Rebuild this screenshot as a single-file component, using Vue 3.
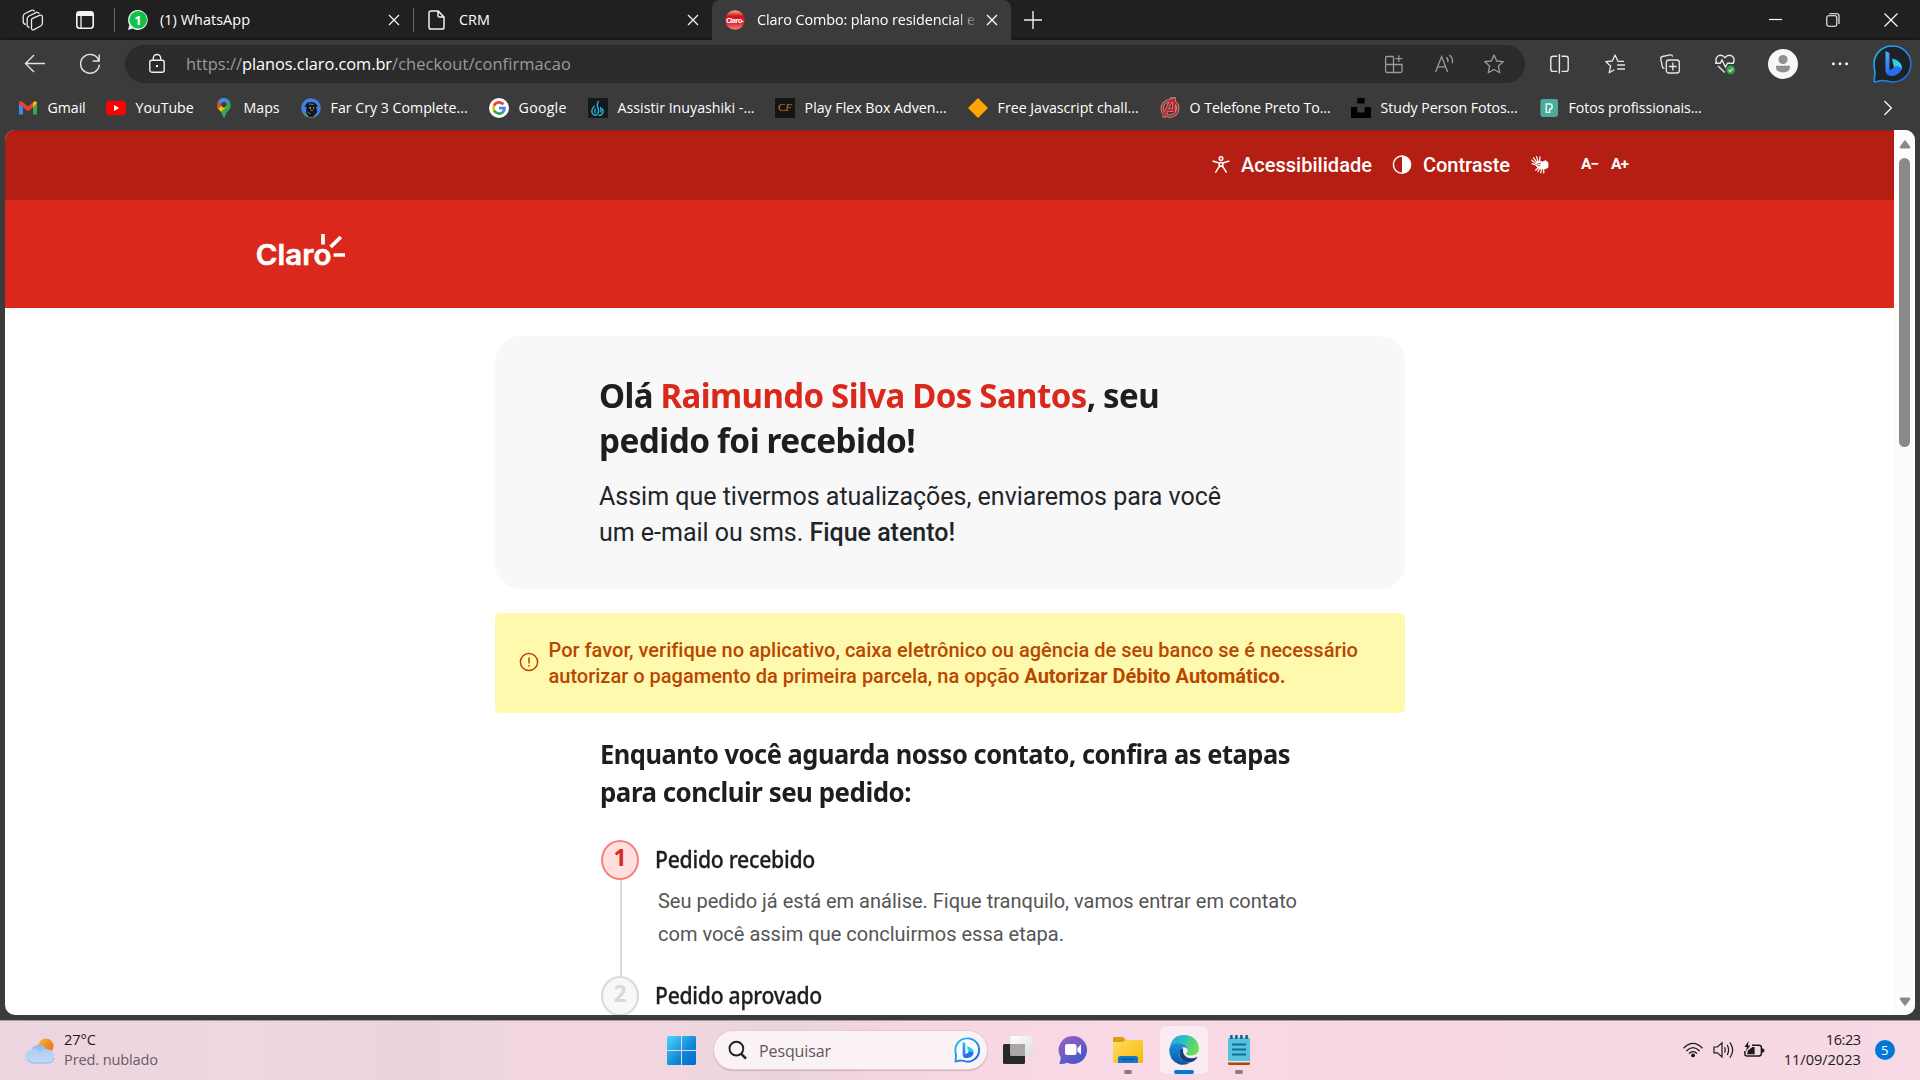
<script setup>
// Tracks a line of text so that it spans the given width in pixels.
const vFit = {
  mounted(el, { value, modifiers }) {
    const w = el.getBoundingClientRect().width
    if (modifiers.scale) {
      el.style.transform = `scaleX(${value / w})`
    } else {
      el.style.letterSpacing = `${(value - w) / el.textContent.length}px`
    }
  },
}

const bookmarks = [
  { id: 'gmail', label: 'Gmail', slot: 88, text: 38 },
  { id: 'youtube', label: 'YouTube', slot: 108, text: 58 },
  { id: 'maps', label: 'Maps', slot: 87, text: 36 },
  { id: 'farcry', label: 'Far Cry 3 Complete...', slot: 188, text: 137 },
  { id: 'google', label: 'Google', slot: 99, text: 48 },
  { id: 'fire', label: 'Assistir Inuyashiki -...', slot: 187, text: 137 },
  { id: 'flex', label: 'Play Flex Box Adven...', slot: 193, text: 142 },
  { id: 'diamond', label: 'Free Javascript chall...', slot: 192, text: 141 },
  { id: 'avengers', label: 'O Telefone Preto To...', slot: 191, text: 141 },
  { id: 'unsplash', label: 'Study Person Fotos...', slot: 188, text: 137 },
  { id: 'pexels', label: 'Fotos profissionais...', slot: 165, text: 133 },
]

const steps = [
  {
    n: 1,
    title: 'Pedido recebido',
    width: 160,
    active: true,
    lines: [
      { t: 'Seu pedido já está em análise. Fique tranquilo, vamos entrar em contato', w: 639 },
      { t: 'com você assim que concluirmos essa etapa.', w: 406 },
    ],
  },
  { n: 2, title: 'Pedido aprovado', width: 167, active: false, lines: [] },
]
</script>

<template>
  <div class="desktop">
    <div class="tabstrip">
      <svg class="ic workspaces" width="22" height="22" viewBox="0 0 22 22" fill="none" stroke="#e8e8e8" stroke-width="1.3" stroke-linejoin="round">
        <path d="M9.5 10.8 Q9.5 9.8 10.6 9.3 L18 6.2 Q20.4 5.8 20.4 8 V14 Q20.4 16 18.6 17 L12 20.6 Q9.5 21.4 9.5 19 Z" />
        <path d="M7.5 18.5 Q5.2 18 5.2 16 V10 Q5.2 8 7 7 L14.5 3.4 Q16.6 2.9 17 4.8" />
        <path d="M3.8 15.5 Q1.2 15 1.2 12.8 V7.5 Q1.2 5.4 3 4.5 L9.5 1.3 Q11.8 .6 12.6 2.4" />
      </svg>
      <svg class="ic tabactions" width="20" height="20" viewBox="0 0 20 20" fill="none" stroke="#f2f2f2" stroke-width="1.6">
        <rect x="1.8" y="1.8" width="16.4" height="16.4" rx="2.6" /><path d="M2 4 H18" stroke-width="4" /><path d="M6 6 V18" stroke-width="1.3" />
      </svg>
      <div class="tab first">
        <svg width="20" height="20" viewBox="0 0 20 20">
          <path d="M10 0 A10 10 0 1 1 4.6 18.6 L0 20 L1.4 15 A10 10 0 0 1 10 0" fill="#e8f5eb" />
          <circle cx="10.2" cy="9.8" r="8.8" fill="#12c04a" />
          <text x="10" y="14.6" text-anchor="middle" font-size="13" font-weight="700" fill="#fff">1</text>
        </svg>
        <span class="tabname" v-fit="90">(1) WhatsApp</span>
        <svg class="close" width="12" height="12" viewBox="0 0 12 12"><path d="M1 1 L11 11 M11 1 L1 11" stroke="#f0f0f0" stroke-width="1.3" /></svg>
      </div>
      <div class="tab second">
        <svg width="17" height="20" viewBox="0 0 17 20" fill="none" stroke="#f0f0f0" stroke-width="1.5" stroke-linejoin="round">
          <path d="M3 .9 H10 L16 7 V17 Q16 19.1 14 19.1 H3 Q1 19.1 1 17 V3 Q1 .9 3 .9 Z M10 1 V5.4 Q10 7 11.6 7 H16" />
        </svg>
        <span class="tabname" v-fit="31">CRM</span>
        <svg class="close" width="12" height="12" viewBox="0 0 12 12"><path d="M1 1 L11 11 M11 1 L1 11" stroke="#f0f0f0" stroke-width="1.3" /></svg>
      </div>
      <div class="tab active">
        <svg width="20" height="20" viewBox="0 0 20 20">
          <defs><linearGradient id="cl" x1="0" y1="0" x2="0" y2="1"><stop offset="0" stop-color="#ffb08a" /><stop offset=".3" stop-color="#d31322" /><stop offset=".62" stop-color="#dd1c2a" /><stop offset="1" stop-color="#f6867c" /></linearGradient></defs>
          <circle cx="10" cy="10" r="9.8" fill="url(#cl)" />
          <text x="10" y="12.6" text-anchor="middle" font-size="7.4" font-weight="700" fill="#fff" textLength="18">Claro-</text>
        </svg>
        <div class="clip"><span class="tabname" v-fit="218">Claro Combo: plano residencial e</span></div>
        <svg class="close" width="12" height="12" viewBox="0 0 12 12"><path d="M1 1 L11 11 M11 1 L1 11" stroke="#fff" stroke-width="1.3" /></svg>
      </div>
      <svg class="plus" width="18" height="18" viewBox="0 0 18 18"><path d="M9 0 V18 M0 9 H18" stroke="#f0f0f0" stroke-width="1.4" /></svg>
      <div class="winbtns">
        <svg width="14" height="14" viewBox="0 0 14 14"><path d="M1 6.5 H14" stroke="#fff" stroke-width="1.2" /></svg>
        <svg width="14" height="14" viewBox="0 0 14 14" fill="none" stroke="#fff" stroke-width="1.1"><rect x=".8" y="2.8" width="10" height="10.4" rx="1.6" /><path d="M3.2 .8 H11 Q13 .8 13 2.8 V11" /></svg>
        <svg width="14" height="14" viewBox="0 0 14 14"><path d="M.5 .5 L13.5 13.5 M13.5 .5 L.5 13.5" stroke="#fff" stroke-width="1.2" /></svg>
      </div>
    </div>

    <div class="toolbar">
      <svg class="back" width="22" height="20" viewBox="0 0 22 20" fill="none" stroke="#e4e4e4" stroke-width="1.4"><path d="M21 9.5 H1.5 M10 1 L1.5 9.5 L10 18" /></svg>
      <svg class="reload" width="22" height="22" viewBox="0 0 22 22" fill="none" stroke="#e4e4e4" stroke-width="1.4"><path d="M20 8 A9.4 9.4 0 1 0 20.4 11.6 M20.2 1.4 V8 H13.6" /></svg>
      <div class="address">
        <svg class="lock" width="16" height="20" viewBox="0 0 16 20" fill="none" stroke="#f0f0f0" stroke-width="1.4"><rect x=".8" y="6.2" width="14.4" height="12" rx="2" /><path d="M4.3 6.2 V4.2 A3.7 3.7 0 0 1 11.7 4.2 V6.2" /><circle cx="8" cy="12.2" r="1.1" fill="#fff" stroke="none" /></svg>
        <span class="url dim" v-fit="56">https://</span><span class="url" v-fit="150">planos.claro.com.br</span><span class="url dim" v-fit="179">/checkout/confirmacao</span>
        <div class="pageacts">
          <svg width="20" height="20" viewBox="0 0 20 20" fill="none" stroke="#9a9a9a" stroke-width="1.3"><path d="M9.5 2.5 H3 Q1.6 2.5 1.6 4 V17 Q1.6 18.5 3 18.5 H16.5 Q18 18.5 18 17 V10.5 H1.6 M9.5 2.5 V18.5 M14.8 1.2 V8 M11.4 4.6 H18.4" /></svg>
          <svg width="20" height="20" viewBox="0 0 20 20" fill="none" stroke="#9a9a9a" stroke-width="1.3"><path d="M1.6 18 L7.6 2.6 L13.6 18 M3.8 12.8 H11.4 M12.2 3.4 Q14.6 5 13.8 8.2 M15.2 1 Q19.6 4.2 18.2 9.2" /></svg>
          <svg width="20" height="20" viewBox="0 0 20 20" fill="none" stroke="#9a9a9a" stroke-width="1.3" stroke-linejoin="round"><path d="M10 1 L12.7 7 L19.2 7.7 L14.4 12.1 L15.8 18.8 L10 15.5 L4.2 18.8 L5.6 12.1 L.8 7.7 L7.3 7 Z" /></svg>
        </div>
      </div>
      <div class="acts">
        <svg width="20" height="20" viewBox="0 0 20 20" fill="none" stroke="#e8e8e8" stroke-width="1.4"><path d="M7.2 2.2 H3 Q.8 2.2 .8 4.4 V15.2 Q.8 17.4 3 17.4 H7.2 M11.6 2.2 H16 Q18.2 2.2 18.2 4.4 V15.2 Q18.2 17.4 16 17.4 H11.6 M9.4 0 V19.6" /></svg>
        <svg width="20" height="20" viewBox="0 0 20 20" fill="none" stroke="#e8e8e8" stroke-width="1.3" stroke-linejoin="round"><path d="M19 7.3 H13 L10 1 L7.3 7 L.8 7.7 L5.6 12.1 L4.2 18.8 L9.3 15.8 M12.2 11 H20 M12.2 15 H20" /></svg>
        <svg width="20" height="20" viewBox="0 0 20 20" fill="none" stroke="#e8e8e8" stroke-width="1.3"><path d="M4.4 14 Q2.6 14.5 2.3 12.5 L.8 5 Q.4 3 2.4 2.5 L10 .9 Q12.2 .6 12.7 2.7" /><rect x="6.3" y="6" width="13" height="13" rx="2.6" /><path d="M12.8 8.6 V16.4 M8.9 12.5 H16.7" /></svg>
        <svg width="20" height="20" viewBox="0 0 20 20" fill="none" stroke="#e8e8e8" stroke-width="1.4"><path d="M1.6 9 Q-.2 4.4 3 2 Q6.8 -.2 10 3.6 Q13.2 -.2 17 2 Q20.2 4.4 18.4 9 M0 9.3 H5.2 L7 6 L10.4 13 L12.6 9.2 H19 M3 12 L9.8 18.4" /><circle cx="15.6" cy="15.8" r="4.4" fill="#37a343" stroke="none" /><path d="M13.6 16 L15.2 17.4 L17.8 14.4" stroke="#d8f0d8" stroke-width="1.1" /></svg>
        <svg class="avatar" width="30" height="30" viewBox="0 0 30 30"><circle cx="15" cy="15" r="15" fill="#f7f7f7" /><circle cx="15" cy="10.5" r="4.6" fill="#8f8f8f" /><path d="M8 16.8 H22 Q22.4 23.4 15 23.4 Q7.6 23.4 8 16.8" fill="#8f8f8f" /></svg>
        <svg class="dots" width="18" height="20" viewBox="0 0 18 20" fill="#f0f0f0"><circle cx="2.4" cy="9.7" r="1.5" /><circle cx="9" cy="9.7" r="1.5" /><circle cx="15.6" cy="9.7" r="1.5" /></svg>
        <svg class="bing" width="38" height="38" viewBox="0 0 38 38">
          <defs><linearGradient id="bo" x1="0" y1="0" x2="1" y2="1"><stop offset="0" stop-color="#23c3f5" /><stop offset="1" stop-color="#1b5fe0" /></linearGradient><linearGradient id="bb" x1="0" y1="0" x2=".6" y2="1"><stop offset="0" stop-color="#4fb7ff" /><stop offset="1" stop-color="#1b62f0" /></linearGradient></defs>
          <path d="M19 1 A18 18 0 1 1 14 36 Q9 34.5 2 37 Q1 37 1.2 36 L2 27 Q1 23 1 19 A18 18 0 0 1 19 1" fill="#1e2226" stroke="url(#bo)" stroke-width="1.6" />
          <path d="M12.5 6 L16.5 8 V24 L19 29 L17.5 30.5 Q12.5 30.5 12.5 24 Z" fill="url(#bb)" /><path d="M19 13.5 Q28 15.5 29 22 Q29 25 26.5 26.5 L21 22.5 Z" fill="#2bcfe9" /><path d="M16 26 L23 21.3 Q27 21 28.5 24 Q26 30.5 18.5 31 Q15 31 13.5 28 Z" fill="#2a6df4" />
        </svg>
      </div>
    </div>

    <div class="bookmarks">
      <div v-for="b in bookmarks" :key="b.id" class="bm" :style="{ width: b.slot + 'px' }">
        <svg width="20" height="20" viewBox="0 0 20 20">
          <g v-if="b.id === 'gmail'"><path d="M1 5 V16.5 H5 V9 Z" fill="#4285f4" /><path d="M19 5 V16.5 H15 V9 Z" fill="#34a853" /><path d="M1 5 Q1 2.6 3.4 3 L10 8.4 L16.6 3 L15.4 9 L10 13.3 L5 9.2 L1 6 Z" fill="#ea4335" /><path d="M15 4.4 Q19 1.6 19 5.6 L15 9.2 Z" fill="#fbbc04" /></g>
          <g v-else-if="b.id === 'youtube'"><rect x="0" y="3" width="20" height="14" rx="3" fill="#f00" /><path d="M8 7 L13.2 10 L8 13 Z" fill="#fff" /></g>
          <g v-else-if="b.id === 'maps'"><path d="M10 0 Q3 .4 3.2 7.4 Q4 11.5 7 13.6 L9.2 19 Q10 21 10.8 19 Q11 16.5 13.5 13.6 Q17 10.5 16.8 7 Q16.4 .6 10 0" fill="#34a853" /><path d="M5 2.6 L8.4 5.6 L3.6 11 Q2.2 6 5 2.6" fill="#ea4335" /><path d="M5 2.6 Q10 -2.4 15 2.6 L8.4 9 Z" fill="#4285f4" /><path d="M4 10.8 L12 4 L13 8.4 L7 13.8 Z" fill="#fbbc04" /><circle cx="10" cy="6.8" r="2.7" fill="#3b3b3b" /></g>
          <g v-else-if="b.id === 'farcry'"><circle cx="10" cy="10" r="9.8" fill="#3f82e6" /><path d="M2 15.6 A9.8 9.8 0 0 0 15 18.4 L12 13 Z" fill="#4c9f5c" /><path d="M3.4 8.4 L6 5 Q10 3 14 5 L17 8 L15 9 L16.4 14 L12 19 H8 L5 15 L5.4 9 Z" fill="#15171d" /><path d="M8 9.6 L10 9.2 V11.2 Z M12 9.2 L13.4 9.8 L12 11 Z" fill="#cfd3dc" /><path d="M6.5 14 L9.5 16 M8 6 L12.6 6.4 M9.6 12.6 L12 12.4" stroke="#7480a0" /></g>
          <g v-else-if="b.id === 'google'"><circle cx="10" cy="10" r="10" fill="#fff" /><g fill="none" stroke-width="2.7"><path d="M14.4 6.4 A5.6 5.6 0 0 0 5 7.6" stroke="#ea4335" /><path d="M5 7.6 A5.6 5.6 0 0 0 5 12.6" stroke="#fbbc05" /><path d="M5 12.4 A5.6 5.6 0 0 0 13.7 14.2" stroke="#34a853" /><path d="M13.6 14.4 Q15.6 12.8 15.5 10.2 H10" stroke="#4285f4" /></g></g>
          <g v-else-if="b.id === 'fire'"><rect width="20" height="20" fill="#15191c" /><path d="M10.5 3 Q8.4 7 10 10 Q11.6 13.5 9 16.6 M6.6 8 Q1.6 13 5.4 16.6 Q7 17.6 9 17 M14 10.4 Q16.6 14.6 13.4 16.6 Q12 17.6 10.4 17.2 M7.6 10.6 Q6 13 7.4 15.4 M12.4 9 Q13.6 12 12.6 14.4" fill="none" stroke="#22bde0" stroke-width="1.3" /></g>
          <g v-else-if="b.id === 'flex'"><rect width="20" height="20" fill="#141414" /><text x="3" y="13.2" font-family="Liberation Serif, serif" font-size="11" fill="#c9771f" textLength="14">C<tspan font-style="italic">F</tspan></text></g>
          <path v-else-if="b.id === 'diamond'" d="M10 0 L20 10 L10 20 L0 10 Z" fill="#ffa500" />
          <g v-else-if="b.id === 'avengers'" fill="none"><circle cx="10" cy="10.4" r="7.8" stroke="#a89a9a" stroke-width="3.4" /><path d="M3.6 19.6 L11.5 1 H14 V14 M6.6 12 H14" stroke="#a89a9a" stroke-width="3.6" /><circle cx="10" cy="10.4" r="7.8" stroke="#cf2027" stroke-width="1.7" /><path d="M3.6 19 L11.5 1.5 H14 V14 M6.6 12 H14" stroke="#cf2027" stroke-width="2" /></g>
          <path v-else-if="b.id === 'unsplash'" d="M6.3 0 H13.7 V5.6 H6.3 Z M0 9 H6.3 V14.6 H13.7 V9 H20 V20 H0 Z" fill="#000" />
          <g v-else><rect x="1.4" y="1" width="17.6" height="18" rx="2.4" fill="#4ea89c" /><path d="M7.2 14.4 V6 H11 Q13.2 6.2 13.2 8.7 Q13.2 11 10.6 11.4 V14.4 Z" fill="none" stroke="#e9fffb" stroke-width="1.4" /></g>
        </svg>
        <span class="bmname" v-fit="b.text">{{ b.label }}</span>
      </div>
      <svg class="more" width="10" height="16" viewBox="0 0 10 16" fill="none" stroke="#f0f0f0" stroke-width="1.4"><path d="M1.4 1 L8.4 8 L1.4 15" /></svg>
    </div>

    <div class="frame">
      <div class="page">
        <div class="site">
          <div class="access">
            <svg width="18" height="18" viewBox="0 0 18 18" fill="none" stroke="#fff" stroke-width="1.5"><circle cx="9" cy="2.6" r="1.8" /><path d="M.6 5 L6.4 6.8 H11.6 L17.4 5 M7.2 6.8 V10.6 L3.4 16.6 M10.8 6.8 V10.6 L14.6 16.6 M7 11 L9 9.8 L11 11" /></svg>
            <span class="al a1" v-fit="131">Acessibilidade</span>
            <svg class="contrast" width="20" height="20" viewBox="0 0 20 20"><circle cx="10" cy="9.6" r="8.6" fill="none" stroke="#fff" stroke-width="1.5" /><path d="M10 1 A8.6 8.6 0 0 1 10 18.2 Z" fill="#fff" /></svg>
            <span class="al a2" v-fit="87">Contraste</span>
            <svg class="hands" width="18" height="18" viewBox="0 0 18 18" fill="none" stroke="#fff" stroke-width="1.2" stroke-linecap="round"><path d="M5 7.6 L.8 4.2 M6 6.6 L2.6 1.8 M7 5.6 L5.6 .6 M8.6 5.4 L9 .8 M4.4 9 L1 7.6 M7 12 L4.6 14.2 M8.6 12.4 L7 15.6 M10.6 12.4 L9.8 16.8 M12.6 12 L12.8 17" /><path d="M4.6 7.4 Q6.6 4 9.6 5.4 L11.6 6 L14.6 4.6 L17 6.6 V11.4 Q14 14 9 12.6 Q5 11.6 4.6 7.4" fill="#fff" stroke-width=".8" /><path d="M6 8.8 L9 10 M9.6 7.8 L7.4 7.2 L6.6 8" stroke="#b51e13" stroke-width=".8" /></svg>
            <span class="sz s1" v-fit="17">A−</span><span class="sz" v-fit="17">A+</span>
          </div>
          <div class="brand">
            <svg width="90" height="36" viewBox="0 0 90 36">
              <text x="-1.2" y="31.6" font-size="28.5" font-weight="600" font-family="Inter, sans-serif" fill="#fff" stroke="#fff" stroke-width=".5" textLength="75.6" lengthAdjust="spacingAndGlyphs">Claro</text>
              <path d="M66 1 V11.6 M73.6 14 L83.8 4 M76.6 22 H88" stroke="#fff" stroke-width="3.7" />
            </svg>
          </div>
          <div class="column">
            <section class="hello">
              <h1>
                <span class="ln" v-fit.scale="560">Olá <em>Raimundo Silva Dos Santos</em>, seu</span>
                <span class="ln" v-fit.scale="316">pedido foi recebido!</span>
              </h1>
              <p>
                <span class="ln" v-fit="622">Assim que tivermos atualizações, enviaremos para você</span>
                <span class="ln" v-fit="356">um e-mail ou sms. <b>Fique atento!</b></span>
              </p>
            </section>
            <section class="alert">
              <svg width="20" height="20" viewBox="0 0 20 20"><circle cx="10" cy="10" r="8.6" fill="none" stroke="#b94700" stroke-width="1.5" /><path d="M10 5.4 V11.4 M10 12.9 V14.5" stroke="#b94700" stroke-width="1.5" /></svg>
              <div>
                <span class="ln" v-fit="809">Por favor, verifique no aplicativo, caixa eletrônico ou agência de seu banco se é necessário</span>
                <span class="ln" v-fit="737">autorizar o pagamento da primeira parcela, na opção <b>Autorizar Débito Automático.</b></span>
              </div>
            </section>
            <section class="progress">
              <h2>
                <span class="ln" v-fit.scale="690">Enquanto você aguarda nosso contato, confira as etapas</span>
                <span class="ln" v-fit.scale="311">para concluir seu pedido:</span>
              </h2>
              <div v-for="s in steps" :key="s.n" class="step">
                <div class="rail"><div class="num" :class="{ on: s.active }">{{ s.n }}</div><div class="bar"></div></div>
                <div class="info">
                  <h3 class="ln" v-fit.scale="s.width">{{ s.title }}</h3>
                  <div class="desc"><span v-for="l in s.lines" :key="l.t" class="ln" v-fit="l.w">{{ l.t }}</span></div>
                </div>
              </div>
            </section>
          </div>
        </div>
        <div class="scroll">
          <svg width="12" height="10" viewBox="0 0 12 10"><path d="M6 1.4 L11 8 Q11 9 10 9 H2 Q1 9 1 8 Z" fill="#8a8a8a" stroke="#8a8a8a" /></svg>
          <div class="thumb"></div>
          <svg class="down" width="12" height="10" viewBox="0 0 12 10"><path d="M6 8.6 L11 2 Q11 1 10 1 H2 Q1 1 1 2 Z" fill="#8a8a8a" stroke="#8a8a8a" /></svg>
        </div>
      </div>
    </div>

    <div class="taskbar">
      <div class="weather">
        <svg width="30" height="26" viewBox="0 0 30 26">
          <defs><linearGradient id="sun" x1="0" y1="0" x2="1" y2="1"><stop offset="0" stop-color="#edb935" /><stop offset="1" stop-color="#ee6412" /></linearGradient><linearGradient id="cld" x1="0" y1="0" x2="0" y2="1"><stop offset="0" stop-color="#8eb6f2" /><stop offset="1" stop-color="#cfe1f8" /></linearGradient></defs>
          <circle cx="21" cy="8" r="7.6" fill="url(#sun)" />
          <path d="M6.5 25 A6 6 0 0 1 5.6 13 A9 9 0 0 1 22 11.6 A7 7 0 0 1 24 25 Z" fill="url(#cld)" /><path d="M1 19 A6.4 6.4 0 0 1 15 16.6 Q17 11 23 11.2 A7 7 0 0 1 24 25 H7 A6 6 0 0 1 1 19" fill="#b9d3f6" opacity=".75" /><path d="M3 22 Q5 25 8 25 H23 Q28 25 29.4 20" fill="none" stroke="#8fb2ec" stroke-width=".9" />
        </svg>
        <div><span class="ln" v-fit="32">27°C</span><span class="ln sub" v-fit="94">Pred. nublado</span></div>
      </div>
      <svg class="start" width="29" height="29" viewBox="0 0 29 29">
        <defs><linearGradient id="win" gradientUnits="userSpaceOnUse" x1="0" y1="0" x2="29" y2="29"><stop offset="0" stop-color="#4fd5ff" /><stop offset=".6" stop-color="#0c87d8" /><stop offset="1" stop-color="#0768c8" /></linearGradient></defs>
        <path d="M1 0 H14 V14 H0 V1 Z M15 0 H28 L29 1 V14 H15 Z M0 15 H14 V29 H1 L0 28 Z M15 15 H29 V28 L28 29 H15 Z" fill="url(#win)" />
      </svg>
      <div class="search">
        <svg width="20" height="20" viewBox="0 0 20 20" fill="none" stroke="#222"><circle cx="8.4" cy="8.6" r="6.9" stroke-width="1.9" /><path d="M13 13.6 L18 18.6" stroke-width="2.5" /></svg>
        <span v-fit="72">Pesquisar</span>
        <svg class="sb" width="26" height="26" viewBox="0 0 38 38"><path d="M19 2 A17 17 0 1 1 14 35 Q9 33.5 3 36 Q2 36 2.2 35 L3 27 Q2 23 2 19 A17 17 0 0 1 19 2" fill="#f8fbff" stroke="url(#bo)" stroke-width="2.8" /><path d="M12.5 7 L16.5 9 V24 L19 29 L17.5 30.5 Q12.5 30.5 12.5 24 Z" fill="url(#bb)" /><path d="M19 13.5 Q28 15.5 29 22 Q29 25 26.5 26.5 L21 22.5 Z" fill="#2bcfe9" /><path d="M16 26 L23 21.3 Q27 21 28.5 24 Q26 30.5 18.5 31 Q15 31 13.5 28 Z" fill="#2a6df4" /></svg>
      </div>
      <div class="app">
        <svg width="30" height="28" viewBox="0 0 30 28"><defs><linearGradient id="tw" x1="0" y1="0" x2="1" y2="1"><stop offset="0" stop-color="#fff" /><stop offset="1" stop-color="#dcdcdc" /></linearGradient></defs><rect x="0" y="8" width="22" height="20" rx="1.5" fill="#292929" /><rect x="7.4" y="0" width="22.6" height="20" rx="1.5" fill="url(#tw)" /><path d="M7.4 8 H22 V20 H9 Q7.4 20 7.4 18.5 Z" fill="#a9a7a8" /></svg>
      </div>
      <div class="app">
        <svg width="28" height="28" viewBox="0 0 28 28"><defs><linearGradient id="ch" x1="0" y1="0" x2=".6" y2="1"><stop offset="0" stop-color="#9a63c0" /><stop offset="1" stop-color="#4b56c8" /></linearGradient></defs><path d="M14 0 A14 14 0 1 1 8.4 26.8 Q5 28 1 28 Q0 27.6 .6 26.4 Q2 23.4 1.8 21.4 A14 14 0 0 1 14 0" fill="url(#ch)" /><rect x="6" y="8" width="11.5" height="11" rx="2" fill="#fff" /><path d="M18.4 12 L22 8.6 V18.4 L18.4 15.4 Z" fill="#fff" /></svg>
      </div>
      <div class="app">
        <svg width="30" height="28" viewBox="0 0 30 28"><defs><linearGradient id="fo" x1="0" y1="0" x2="1" y2="1"><stop offset="0" stop-color="#ffdc68" /><stop offset="1" stop-color="#f8b800" /></linearGradient></defs><path d="M0 6 V2.4 Q0 1 1.4 1 H9.6 L13 4 L10 7 Z" fill="#dd9c09" /><path d="M0 6 H9.5 L13 4 H28.6 Q30 4 30 5.4 V25.6 Q30 27 28.6 27 H1.4 Q0 27 0 25.6 Z" fill="url(#fo)" /><path d="M5 27 V22.5 Q5 20 7.5 20 H22.5 Q25 20 25 22.5 V27 Z" fill="#1377c7" /><path d="M8.6 23.4 H21.4" stroke="#07559b" stroke-width="1.4" /></svg>
        <i class="mark"></i>
      </div>
      <div class="app current">
        <svg width="30" height="30" viewBox="0 0 30 30"><defs><linearGradient id="e1" x1="0" y1="0" x2="1" y2=".3"><stop offset="0" stop-color="#2ba4dc" /><stop offset=".5" stop-color="#2dbfc0" /><stop offset="1" stop-color="#6bdd55" /></linearGradient><linearGradient id="e2" x1="0" y1="0" x2="0" y2="1"><stop offset="0" stop-color="#1c91db" /><stop offset="1" stop-color="#0b55a8" /></linearGradient></defs>
          <path d="M.6 13 Q3 0 15 0 Q28 .8 29.8 12 Q30.4 20 22.6 20.6 Q17 20.6 17 18.6 Q19.4 17 18.6 14.2 Q16 8 8 9 Q3 10 .6 13" fill="url(#e1)" /><path d="M.2 14 Q3 7.4 10.4 8.4 Q17.5 9 18.8 14.6 Q16 11 13 12.8 Q8 18.4 12 24 Q15 28 21 27.4 Q17 31 10 29.2 Q0 25.6 .2 14" fill="url(#e2)" /><path d="M12.6 13 Q8.4 18 12 23.8 Q17 30 25 26 Q28 24 28.4 21.8 Q22.4 24.8 17.4 22 Q13 18.6 14.2 14 Z" fill="#123f7e" /></svg>
        <i class="mark"></i>
      </div>
      <div class="app">
        <svg width="22" height="30" viewBox="0 0 22 30"><path d="M0 26 H22 V28.4 Q22 30 20.4 30 H1.6 Q0 30 0 28.4 Z" fill="#a44e0d" /><path d="M0 25 H22 V27.4 H0 Z" fill="#f5e9de" /><path d="M0 4 Q0 2.4 1.6 2.4 H20.4 Q22 2.4 22 4 V26 H0 Z" fill="#56c2de" /><path d="M3.4 0 V4 M8.4 0 V4 M13.4 0 V4 M18.6 0 V4" stroke="#0d5f85" stroke-width="2.4" /><path d="M4 9.6 H18 M4 14.6 H18 M4 19.6 H18" stroke="#136c92" stroke-width="2" /></svg>
        <i class="mark"></i>
      </div>
      <div class="tray">
        <svg width="20" height="16" viewBox="0 0 20 16" fill="none" stroke="#1d1a1c" stroke-width="1.4"><path d="M.6 6.2 Q10 -3.4 19.4 6.2 M3.4 9 Q10 2.2 16.6 9 M6 11.6 Q10 7.6 14 11.6" /><circle cx="10" cy="13.4" r="1.9" fill="#1d1a1c" stroke="none" /></svg>
        <svg width="21" height="18" viewBox="0 0 21 18" fill="none" stroke="#1d1a1c" stroke-width="1.2"><path d="M1 6 H4.4 L9 1.8 V16 L4.4 11.8 H1 Z M11.6 6.2 Q13 9 11.6 11.6 M14.2 3.8 Q17 9 14.2 14 M16.8 1.4 Q22.6 9 16.8 16.6" /></svg>
        <svg width="21" height="18" viewBox="0 0 21 18"><path d="M8 4.2 H15 Q17.4 4.2 17.4 6.6 V12.6 Q17.4 15 15 15 H3 Q.9 15 .9 13 V10" fill="none" stroke="#1d1a1c" stroke-width="1.5" /><path d="M18 7.6 H19 Q20.4 7.6 20.4 9.6 Q20.4 11.6 19 11.6 H18 Z M3 13.2 L4 9.6 L8.4 6 H10.6 V13.2 Z M4.6 0 L.4 6 H3 L1.8 10.4 L6.4 4.4 H4 Z" fill="#1d1a1c" /></svg>
      </div>
      <div class="clock"><span class="ln" v-fit="35">16:23</span><span class="ln" v-fit="77">11/09/2023</span></div>
      <div class="badge">5</div>
    </div>
  </div>
</template>

<style>
body { margin: 0; overflow: hidden; }
</style>

<style scoped>
.desktop { width: 1920px; height: 1080px; display: flex; flex-direction: column; background: #3b3b3b; font-family: "Open Sans", "Noto Sans", sans-serif; color: #fff; overflow: hidden; }
svg { flex: none; display: block; overflow: visible; }
span, h3 { white-space: pre; }
.ln { display: block; width: fit-content; transform-origin: 0 50%; }

.tabstrip { height: 40px; background: #202020; display: flex; align-items: center; flex: none; box-shadow: inset 0 -2px 2px #191919; }
.workspaces { margin-left: 22px; }
.tabactions { margin-left: 31px; }
.tab { display: flex; align-items: center; height: 40px; box-sizing: border-box; }
.tab.first, .tab.second { background: linear-gradient(#666, #666) 0 8px / 1px 24px no-repeat; }
.tab.first { margin-left: 19px; width: 299px; padding-left: 14px; }
.tab.second { width: 299px; padding-left: 15px; }
.tab.active { width: 299px; padding-left: 13px; background: #3b3b3b; border-radius: 8px 8px 0 0; }
.tabname { font-size: 14.4px; line-height: 40px; height: 40px; margin-left: 12px; display: block; width: fit-content; }
.tab.second .tabname { margin-left: 14px; }
.clip { overflow: hidden; width: 232px; -webkit-mask-image: linear-gradient(90deg, #000 210px, transparent 236px); mask-image: linear-gradient(90deg, #000 210px, transparent 236px); }
.close { margin-left: auto; margin-right: 13px; }
.plus { margin-left: 13px; }
.winbtns { margin-left: auto; margin-right: 22px; display: flex; gap: 44px; }

.toolbar { height: 48px; display: flex; align-items: center; flex: none; }
.back { margin-left: 24px; }
.reload { margin-left: 33px; }
.address { margin-left: 24px; width: 1400px; height: 38px; border-radius: 19px; background: #2b2b2b; display: flex; align-items: center; }
.lock { margin-left: 24px; margin-right: 21px; }
.url { font-size: 16.4px; line-height: 38px; height: 38px; }
.dim { color: #9b9b9b; }
.pageacts { margin-left: auto; margin-right: 21px; display: flex; gap: 30px; }
.acts { display: flex; align-items: center; margin-left: 25px; }
.acts svg { margin-right: 35px; }
.acts .avatar { margin-left: -2px; margin-right: 33px; }
.acts .dots { margin-right: 25px; }
.acts .bing { margin: 0 0 0 -1px; }

.bookmarks { height: 42px; padding: 0 0 2px 18px; box-sizing: border-box; display: flex; align-items: center; flex: none; }
.bm { display: flex; align-items: center; gap: 10px; flex: none; }
.bmname { font-size: 14.2px; line-height: 20px; margin-left: -.4px; }
.more { margin-left: 179px; }

.frame { height: 890px; padding: 0 5px 5px; box-sizing: border-box; flex: none; }
.page { height: 885px; border-radius: 10px; overflow: hidden; background: #fff; display: flex; }
.site { width: 1889px; height: 885px; overflow: hidden; font-family: Roboto, sans-serif; }
.access { height: 70px; background: #b51e13; display: flex; align-items: center; padding: 0 0 1px 1207px; box-sizing: border-box; box-shadow: inset 0 2px 2px #9f2018; }
.al { font-size: 20px; font-weight: 500; line-height: 30px; }
.a1 { margin-left: 11px; }
.contrast { margin-left: 20px; }
.a2 { margin-left: 11px; }
.hands { margin-left: 21px; }
.sz { font-size: 15.5px; font-weight: 700; line-height: 28px; padding-bottom: 2px; }
.s1 { margin-left: 32px; margin-right: 13px; }
.brand { height: 108px; background: #da291c; padding: 33px 0 0 252px; box-sizing: border-box; }
.column { width: 910px; margin: 28px 0 0 490px; }
.hello { height: 253px; border-radius: 25px; background: #f8f8f8; box-sizing: border-box; padding: 36px 0 0 104px; color: #212529; }
h1, h2, h3, p { margin: 0; }
h1 { font: 700 34.5px/45px "Noto Sans", "Open Sans", sans-serif; letter-spacing: -.6px; word-spacing: -.5px; color: #1e1e1e; }
em { font-style: normal; color: #da291c; }
p { margin-top: 17px; font-size: 25px; line-height: 36px; }
p b { font-weight: 500; }
.alert { margin-top: 24px; height: 100px; border-radius: 5px; background: #fff9ae; color: #b94700; font-size: 20px; font-weight: 500; line-height: 26px; display: flex; padding: 24px 0 0 24px; box-sizing: border-box; }
.alert svg { margin: 15px 9.5px 0 0; }
.alert b { font-weight: 700; }
.progress { padding: 22px 0 0 105px; }
h2 { font: 700 27.5px/38px "Noto Sans", "Open Sans", sans-serif; letter-spacing: -.5px; color: #1e1e1e; margin-bottom: 29px; }
.step { display: flex; height: 136px; }
.rail { width: 40px; display: flex; flex-direction: column; align-items: center; }
.num { width: 38px; height: 40px; flex: none; box-sizing: border-box; border: 2px solid #d9d9d9; border-radius: 50%; background: #f8f8f8; color: #d9d9d9; font: 700 23px/30px "Noto Sans", sans-serif; text-align: center; }
.num.on { border-color: #fb8078; background: #ffe0df; color: #da291c; }
.bar { width: 2px; height: 96px; margin-left: 1px; background: #dadada; }
.info { margin-left: 15px; }
h3 { font: 500 23.5px/40px "Noto Sans", "Open Sans", sans-serif; -webkit-text-stroke: .3px #1e1e1e; letter-spacing: -.3px; color: #1e1e1e; margin-top: -1px; }
.desc { margin: 6px 0 0 3px; font-size: 20px; line-height: 33px; color: #555; }
.scroll { width: 21px; background: #fcfcfc; display: flex; flex-direction: column; align-items: center; padding: 9px 0 8px; box-sizing: border-box; flex: none; }
.thumb { width: 11px; height: 289px; margin-top: 9px; border-radius: 6px; background: #8a8a8a; }
.down { margin-top: auto; }

.taskbar { height: 60px; flex: none; box-sizing: border-box; border-top: 1px solid #a9989f; display: flex; align-items: flex-start; background: linear-gradient(90deg, #ecd5df 0, #efd6e1 250px, #ead4da 420px, #f1d6df 520px, #f1d6df 660px, #ecd4da 780px, #f6d7e3 950px, #f8d9e5 1150px, #f6d7e1 1400px, #f6d9e4 1920px); color: #1d1a1c; }
.weather { display: flex; margin-left: 25px; width: 642px; font-size: 14.6px; line-height: 20px; }
.weather svg { margin: 17px 9px 0 0; }
.weather div { padding-top: 8px; }
.sub { color: #6a5c64; }
.start { margin-top: 15px; }
.search { margin: 10px 0 0 18px; width: 273px; height: 38px; box-sizing: border-box; border-radius: 19px; background: #fbf2f6; box-shadow: 0 0 0 1px #e6cad4, 0 1px 1px 1px #cfb4be; display: flex; align-items: center; padding: 0 7px 0 14px; font-size: 16px; color: #5d5759; }
.search span { margin-left: 11px; padding-top: 1px; }
.sb { margin-left: auto; }
.app { width: 48px; height: 48px; margin: 5px 0 0 7.2px; border-radius: 5px; display: flex; align-items: center; justify-content: center; position: relative; }
.search + .app { margin-left: 7px; }
.current { background: #faeaf1; box-shadow: 0 0 0 1px #efd8e1; }
.mark { position: absolute; bottom: 0; left: 20px; width: 8px; height: 4px; border-radius: 2px; background: #8a7b83; }
.current .mark { left: 14px; width: 20px; background: #0078d4; }
.tray { display: flex; align-items: center; gap: 10px; margin: 20px 0 0 420px; height: 18px; }
.clock { margin: 8px 0 0 14px; width: 82px; display: flex; flex-direction: column; align-items: flex-end; font-size: 14.6px; line-height: 20px; }
.badge { margin: 18.5px 0 0 14px; width: 20px; height: 20px; border-radius: 50%; background: #0078d7; color: #fff; font-size: 13px; line-height: 20px; text-align: center; }
</style>
